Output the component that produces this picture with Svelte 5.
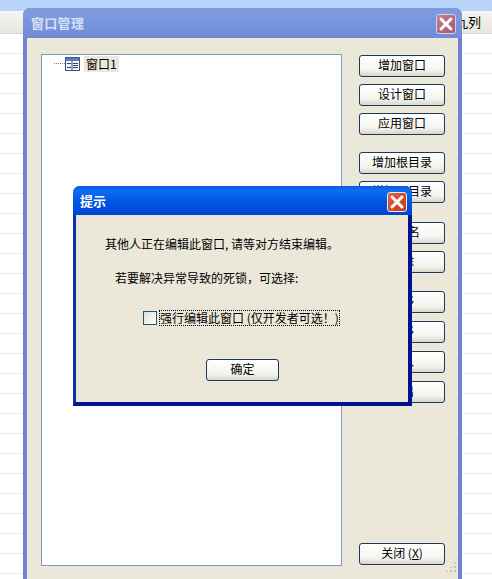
<script lang="ts">
const rows = Array.from({ length: 28 }, (_, i) => i);
// button groups in the right column of the manager window
const groups = [
    ["增加窗口", "设计窗口", "应用窗口"],
    ["增加根目录", "增加子目录"],
    ["重命名", "删除"],
    ["上移", "下移", "导入", "导出"],
];
</script>

<div class="desktop">
    <div class="sheet">
        <div class="strip"></div>
        <div class="header"><span>九列</span></div>
        {#each rows as r (r)}
            <div class="row"></div>
        {/each}
    </div>

    <section class="win">
        <header class="win-title">
            <span>窗口管理</span>
            <button class="x x-faded" aria-label="关闭">
                <svg viewBox="0 0 20 20" width="20" height="20"><path d="M5 5l10 10M15 5L5 15" stroke="#fff" stroke-width="3" stroke-linecap="round" /></svg>
            </button>
        </header>
        <div class="win-body">
            <div class="tree">
                <div class="node">
                    <i class="dots"></i>
                    <svg class="node-icon" viewBox="0 0 15 14" width="15" height="14">
                        <rect x="0.5" y="0.5" width="14" height="13" fill="#f4f6fb" stroke="#3f5488" />
                        <rect x="1" y="1" width="13" height="3" fill="#5c7ab8" />
                        <path d="M2 6.5h4M2 10.5h4M8 6.5h5M8 8.5h5M8 10.5h5M7 4v9" stroke="#33436b" fill="none" />
                    </svg>
                    <span class="node-label">窗口1</span>
                </div>
            </div>
            <div class="side">
                {#each groups as g}
                    <div class="group">
                        {#each g as label}
                            <button class="btn">{label}</button>
                        {/each}
                    </div>
                {/each}
                <button class="btn close">关闭 (<u>X</u>)</button>
            </div>
        </div>
        <div class="grip"></div>
    </section>

    <section class="dlg">
        <header class="dlg-title">
            <span>提示</span>
            <button class="x" aria-label="关闭">
                <svg viewBox="0 0 20 20" width="20" height="20"><path d="M5 5l10 10M15 5L5 15" stroke="#fff" stroke-width="3" stroke-linecap="round" /></svg>
            </button>
        </header>
        <div class="dlg-body">
            <p class="msg">其他人正在编辑此窗口, 请等对方结束编辑。</p>
            <p class="msg second">若要解决异常导致的死锁，可选择:</p>
            <div class="check">
                <i class="box"></i>
                <span class="check-label">强行编辑此窗口 (仅开发者可选！)</span>
            </div>
            <button class="btn ok">确定</button>
        </div>
    </section>
</div>

<style>
:global(body) {
    margin: 0;
    background: #fff;
}

.desktop {
    position: relative;
    width: 492px;
    height: 579px;
    overflow: hidden;
    font-family: "Noto Sans CJK SC", "Liberation Sans", sans-serif;
    font-size: 12px;
    color: #000;
}

.strip {
    height: 11px;
    background: #b9d5fb;
}

.header {
    height: 21px;
    display: flex;
    justify-content: flex-end;
    align-items: center;
    padding-right: 11px;
    padding-bottom: 1px;
    background: linear-gradient(#f6f6f2, #e6e6de);
    border-bottom: 1px solid #d8d8d0;
    font-size: 13px;
    line-height: 1;
}

.row {
    height: 19px;
    border-bottom: 1px solid #ebeae0;
}

.win {
    position: absolute;
    left: 23px;
    top: 8px;
    width: 439px;
    height: 610px;
    display: flex;
    flex-direction: column;
    border-radius: 7px 7px 0 0;
    background: linear-gradient(90deg, #6f82d6, #8595e0 50%, #6f82d6);
}

.win-title {
    height: 30px;
    flex: none;
    box-sizing: border-box;
    display: flex;
    align-items: center;
    justify-content: space-between;
    padding: 2px 6px 0 8px;
    border-radius: 7px 7px 0 0;
    background: linear-gradient(#7d9ad9 0, #7e9bde 20%, #7390dc 75%, #6f8bd6 100%);
    color: #d5e0f3;
    font-size: 13px;
    font-weight: 700;
    letter-spacing: 0.3px;
}

.win-title span,
.dlg-title span {
    margin-top: -3px;
}

.x {
    width: 20px;
    height: 20px;
    padding: 0;
    display: block;
    box-sizing: border-box;
    border: 1px solid #e8e8f0;
    border-radius: 3px;
    background: linear-gradient(135deg, #e0623a, #c23a1c);
}

.x-faded {
    border-color: #c9d3ee;
    background: linear-gradient(135deg, #c4818f, #a8586f);
}

.x svg {
    display: block;
    margin: -1px;
}

.win-body {
    flex: 1;
    display: flex;
    margin: 0 4px;
    padding: 16px 16px 0 14px;
    background: #ebe8da;
}

.tree {
    width: 299px;
    height: 510px;
    flex: none;
    background: #fff;
    border: 1px solid #7f9db9;
}

.node {
    display: flex;
    align-items: center;
    height: 17px;
    padding-left: 12px;
}

.dots {
    width: 11px;
    border-top: 1px dotted #808080;
}

.node-icon {
    flex: none;
}

.node-label {
    margin-left: 4px;
    padding: 0 2px;
    height: 16px;
    line-height: 15px;
    background: #ebe8da;
}

.side {
    margin: 1px 0 0 17px;
    width: 86px;
    height: 510px;
    display: flex;
    flex-direction: column;
    gap: 17px;
}

.group {
    display: flex;
    flex-direction: column;
    gap: 7px;
}

/* the groups further down are spaced a little wider in the original */
.group:nth-child(3) {
    margin-top: 2px;
}

.group:nth-child(4) {
    margin-top: 1px;
    gap: 8px;
}

.btn {
    display: block;
    height: 22px;
    width: 86px;
    padding: 0 0 3px;
    border: 1px solid #1c3a5a;
    border-radius: 3px;
    background: linear-gradient(#fff, #f4f4ef 70%, #d9d5c8);
    font: inherit;
    line-height: 16px;
    color: #000;
}

.close {
    margin-top: auto;
}

.grip {
    position: absolute;
    right: 5px;
    top: 553px;
    width: 12px;
    height: 12px;
    background-image: radial-gradient(circle, #c2bfb0 1px, transparent 1.2px);
    background-size: 4px 4px;
    clip-path: polygon(100% 0, 100% 100%, 0 100%);
}

.dlg {
    position: absolute;
    left: 73px;
    top: 186px;
    width: 339px;
    height: 220px;
    box-sizing: border-box;
    display: flex;
    flex-direction: column;
    border: solid #0a2fb5;
    border-width: 0 4px 4px 3px;
    border-bottom-color: #00138c;
    border-right-color: #00138c;
    border-radius: 7px 7px 0 0;
    background: #ebe8da;
}

.dlg-title {
    height: 29px;
    flex: none;
    margin: 0 -4px 0 -3px;
    box-sizing: border-box;
    display: flex;
    align-items: center;
    justify-content: space-between;
    padding: 2px 5px 0 7px;
    border-radius: 7px 7px 0 0;
    background: linear-gradient(#0a5be0 0, #0f6df0 15%, #0055e5 55%, #0046d2 100%);
    color: #fff;
    font-size: 13px;
    font-weight: 700;
}

.dlg-body {
    flex: 1;
    display: flex;
    flex-direction: column;
    align-items: flex-start;
    padding-top: 20px;
}

.msg {
    margin: 0 0 0 29px;
    line-height: 17px;
    white-space: nowrap;
}

.second {
    margin: 17px 0 0 39px;
}

.check {
    display: flex;
    align-items: center;
    margin: 24px 0 0 67px;
}

.box {
    width: 12px;
    height: 12px;
    flex: none;
    border: 1px solid #1c5180;
    background: linear-gradient(135deg, #dcdcd7, #fff);
}

.check-label {
    margin-left: 2px;
    padding: 0 1px 1px;
    outline: 1px dotted #000;
    outline-offset: -1px;
    line-height: 15px;
    white-space: nowrap;
}

.ok {
    width: 73px;
    margin: 33px 0 0 130px;
}
</style>
